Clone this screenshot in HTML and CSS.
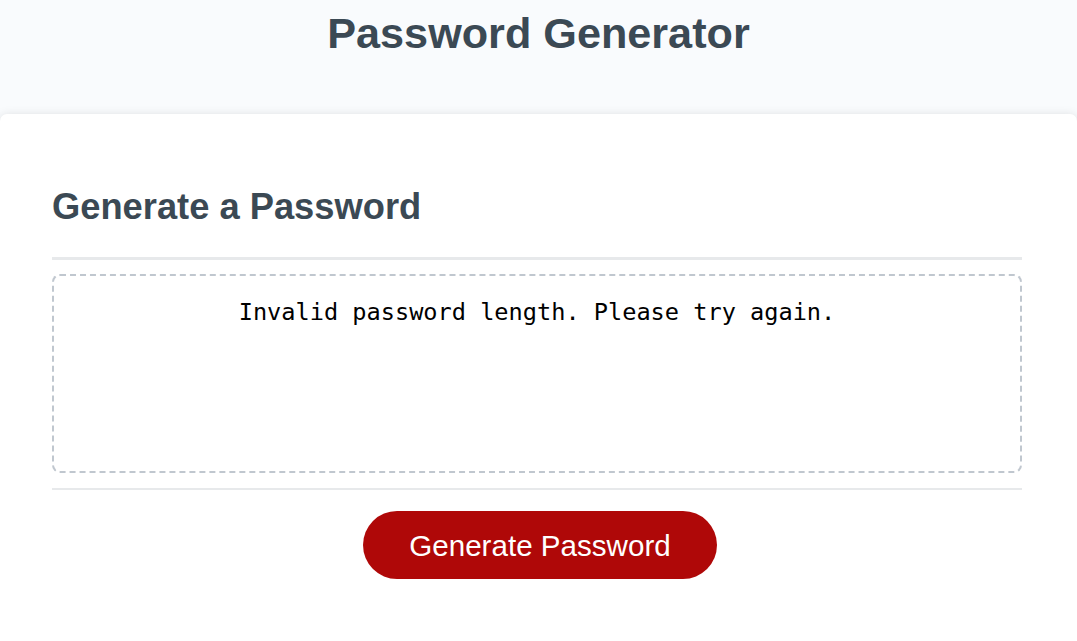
FILE: index.html
```html
<!DOCTYPE html>
<html lang="en">
<head>
<meta charset="utf-8">
<title>Password Generator</title>
<link rel="stylesheet" href="styles.css">
</head>
<body>
  <header class="site-header">
    <h1 class="site-title">Password Generator</h1>
  </header>
  <main class="card">
    <div class="card-header">
      <h2 class="card-title">Generate a Password</h2>
    </div>
    <div class="card-body">
      <textarea readonly id="password" class="password-box" aria-label="Generated Password">Invalid password length. Please try again.</textarea>
    </div>
    <div class="card-footer">
      <button class="btn" type="button">Generate Password</button>
    </div>
  </main>
</body>
</html>
```

FILE: styles.css
```css
*,
*::before,
*::after {
  box-sizing: border-box;
}

html,
body {
  margin: 0;
  padding: 0;
  height: 100%;
  overflow: hidden;
}

body {
  display: flex;
  flex-direction: column;
  font-family: "Liberation Sans", Arial, sans-serif;
  background-color: #f9fbfd;
}

.site-header {
  flex: none;
  text-align: center;
  padding: 9px 20px 56px;
  color: #3b4954;
}

.site-title {
  margin: 0;
  font-size: 43.2px;
  font-weight: bold;
  line-height: 49px;
}

.card {
  flex: 1;
  background-color: #ffffff;
  border-radius: 7px 7px 0 0;
  box-shadow: rgba(0, 0, 0, 0.15) 0 2.67px 10.67px 0;
  color: #3b4954;
  padding: 40px 55px 0 52px;
}

.card-title {
  margin: 32px 0 30px;
  font-size: 36.3px;
  font-weight: bold;
  line-height: 41px;
}

.card-header::after {
  content: "";
  display: block;
  height: 2.67px;
  background: #e7e9eb;
}

.password-box {
  appearance: none;
  -webkit-appearance: none;
  display: block;
  width: 100%;
  height: 199px;
  margin: 14px 0 15px;
  padding: 23px 20px 0;
  border: 2.67px dashed #c0c7cf;
  border-radius: 8px;
  font-family: "DejaVu Sans Mono", "Liberation Mono", monospace;
  font-size: 23.6px;
  line-height: 27.5px;
  color: #000000;
  background: #ffffff;
  text-align: center;
  resize: none;
  overflow: hidden;
  outline: none;
}

.card-footer {
  text-align: center;
}

.card-footer::before {
  content: "";
  display: block;
  height: 2.67px;
  background: #e7e9eb;
}

.btn {
  display: inline-block;
  margin: 21px 21px 0 27px;
  border: none;
  border-radius: 34px;
  padding: 19.3px 46px;
  background-color: #af0808;
  color: #ffffff;
  font-family: "Liberation Sans", Arial, sans-serif;
  font-size: 29.6px;
  line-height: 29.33px;
  cursor: pointer;
}
```
